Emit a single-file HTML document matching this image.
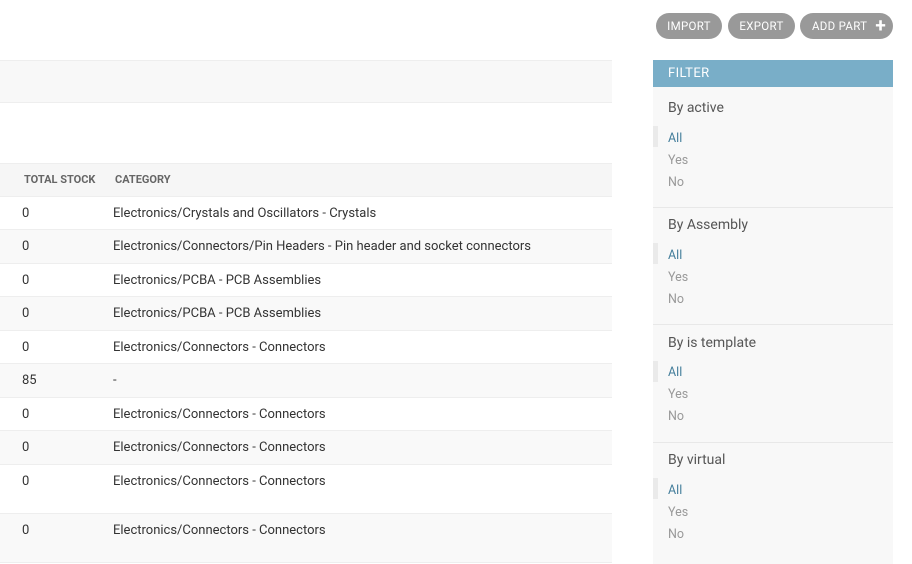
<!DOCTYPE html>
<html><head><style>
*{margin:0;padding:0;box-sizing:border-box}
body{width:912px;height:564px;background:#fff;font-family:Roboto,"Liberation Sans",sans-serif;color:#333;position:relative;overflow:hidden;font-size:13px}
.a{position:absolute}
.btn{position:absolute;top:13px;height:26px;border-radius:13px;background:#999;color:#fff;font-size:11.5px;line-height:26px;text-align:center;letter-spacing:.3px}
.row{position:absolute;left:0;width:612px;border-bottom:1px solid #eee}
.row span{position:absolute;top:9px}
.f{position:absolute;left:668px;font-size:12.5px}
</style></head><body>
<div class="btn" style="left:656px;width:66px">IMPORT</div>
<div class="btn" style="left:728px;width:67px">EXPORT</div>
<div class="btn" style="left:800px;width:93px;text-align:left;padding-left:12px">ADD PART <span style="font-weight:bold;font-size:19px;position:absolute;right:7px;top:0px">+</span></div>

<div class="a" style="left:0;top:60px;width:612px;height:43px;background:#f8f8f8;border-top:1px solid #eee;border-bottom:1px solid #eee"></div>
<div class="a" style="left:0;top:163px;width:612px;height:34px;background:#f6f6f6;border-top:1px solid #eee;border-bottom:1px solid #eee"></div>
<div class="a" style="left:24px;top:173px;font-size:11px;font-weight:bold;color:#666">TOTAL STOCK</div>
<div class="a" style="left:115px;top:173px;font-size:11px;font-weight:bold;color:#666">CATEGORY</div>

<div class="row" style="top:197px;height:33px;background:#fff"><span style="left:22px">0</span><span style="left:113px">Electronics/Crystals and Oscillators - Crystals</span></div>
<div class="row" style="top:230px;height:34px;background:#f9f9f9"><span style="left:22px">0</span><span style="left:113px">Electronics/Connectors/Pin Headers - Pin header and socket connectors</span></div>
<div class="row" style="top:264px;height:33px;background:#fff"><span style="left:22px">0</span><span style="left:113px">Electronics/PCBA - PCB Assemblies</span></div>
<div class="row" style="top:297px;height:34px;background:#f9f9f9"><span style="left:22px">0</span><span style="left:113px">Electronics/PCBA - PCB Assemblies</span></div>
<div class="row" style="top:331px;height:33px;background:#fff"><span style="left:22px">0</span><span style="left:113px">Electronics/Connectors - Connectors</span></div>
<div class="row" style="top:364px;height:34px;background:#f9f9f9"><span style="left:22px">85</span><span style="left:113px">-</span></div>
<div class="row" style="top:398px;height:33px;background:#fff"><span style="left:22px">0</span><span style="left:113px">Electronics/Connectors - Connectors</span></div>
<div class="row" style="top:431px;height:34px;background:#f9f9f9"><span style="left:22px">0</span><span style="left:113px">Electronics/Connectors - Connectors</span></div>
<div class="row" style="top:465px;height:49px;background:#fff"><span style="left:22px">0</span><span style="left:113px">Electronics/Connectors - Connectors</span></div>
<div class="row" style="top:514px;height:49px;background:#f9f9f9"><span style="left:22px">0</span><span style="left:113px">Electronics/Connectors - Connectors</span></div>

<div class="a" style="left:653px;top:60px;width:240px;height:504px;background:#f8f8f8"></div>
<div class="a" style="left:653px;top:60px;width:240px;height:27px;background:#79aec8;color:#fff;font-size:13px;line-height:28px;padding-left:15px;letter-spacing:.4px">FILTER</div>

<div class="f" style="top:100px;font-size:14px;color:#555">By active</div>
<div class="a" style="left:653px;top:126px;width:5px;height:21px;background:#eaeaea"></div>
<div class="f" style="top:131px;color:#447e9b">All</div>
<div class="f" style="top:153px;color:#999">Yes</div>
<div class="f" style="top:175px;color:#999">No</div>
<div class="a" style="left:653px;top:207px;width:240px;height:1px;background:#e8e8e8"></div>

<div class="f" style="top:217px;font-size:14px;color:#555">By Assembly</div>
<div class="a" style="left:653px;top:243px;width:5px;height:21px;background:#eaeaea"></div>
<div class="f" style="top:248px;color:#447e9b">All</div>
<div class="f" style="top:270px;color:#999">Yes</div>
<div class="f" style="top:292px;color:#999">No</div>
<div class="a" style="left:653px;top:324px;width:240px;height:1px;background:#e8e8e8"></div>

<div class="f" style="top:335px;font-size:14px;color:#555">By is template</div>
<div class="a" style="left:653px;top:361px;width:5px;height:21px;background:#eaeaea"></div>
<div class="f" style="top:365px;color:#447e9b">All</div>
<div class="f" style="top:387px;color:#999">Yes</div>
<div class="f" style="top:409px;color:#999">No</div>
<div class="a" style="left:653px;top:442px;width:240px;height:1px;background:#e8e8e8"></div>

<div class="f" style="top:452px;font-size:14px;color:#555">By virtual</div>
<div class="a" style="left:653px;top:478px;width:5px;height:21px;background:#eaeaea"></div>
<div class="f" style="top:483px;color:#447e9b">All</div>
<div class="f" style="top:505px;color:#999">Yes</div>
<div class="f" style="top:527px;color:#999">No</div>
</body></html>
